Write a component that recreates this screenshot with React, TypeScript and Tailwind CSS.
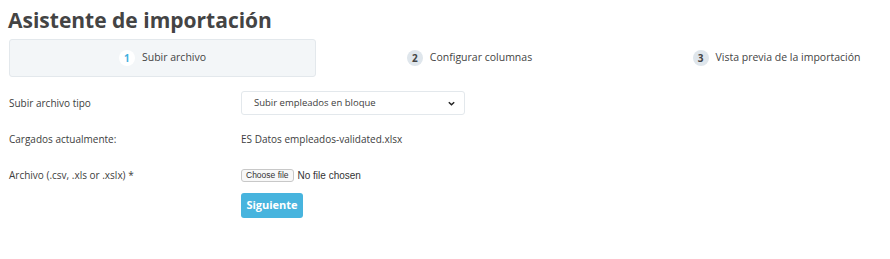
const font = { fontFamily: '"Open Sans", "Noto Sans", sans-serif' };

const steps = [
  { n: 1, label: "Subir archivo", active: true },
  { n: 2, label: "Configurar columnas", active: false },
  { n: 3, label: "Vista previa de la importación", active: false },
];

export default function App() {
  return (
    <div className="w-[890px] h-[259px] overflow-hidden bg-white text-[#3a3a3a]" style={font}>
      <h1 className="pl-2 pt-[5px] text-[21px] leading-[30px] font-bold text-[#444]">
        Asistente de importación
      </h1>

      {/* pasos */}
      <div className="mt-[4px] ml-[9px] grid w-[921px] grid-cols-3">
        {steps.map((s) => (
          <div
            key={s.n}
            className={`flex h-[38px] items-center justify-center gap-[7px] rounded-[3px] border ${
              s.active ? "border-[#e3e8ec] bg-[#f3f6f8]" : "border-transparent"
            }`}
          >
            <span
              className={`flex h-4 w-4 items-center justify-center rounded-full text-[10px] font-bold ${
                s.active ? "bg-white text-[#3fb0e0]" : "bg-[#dfe6ec] text-[#444]"
              }`}
            >
              {s.n}
            </span>
            <span className="text-[10.5px] text-[#444]">{s.label}</span>
          </div>
        ))}
      </div>

      {/* formulario */}
      <div className="mt-[14px] grid grid-cols-[232px_1fr] items-center pl-[9px] text-[10px] text-[#3d3d3d]">
        <span>Subir archivo tipo</span>
        <div className="flex h-[24px] w-[224px] items-center justify-between rounded-[3px] border border-[#e3e8ec] pl-[12px] pr-[8px] text-[9.5px]">
          <span>Subir empleados en bloque</span>
          <svg width="9" height="9" viewBox="0 0 10 10" fill="none">
            <path d="M2 3.5 5 6.5 8 3.5" stroke="#222" strokeWidth="1.6" />
          </svg>
        </div>

        <span className="mt-[17px]">Cargados actualmente:</span>
        <span className="mt-[17px]">ES Datos empleados-validated.xlsx</span>

        <span className="mt-[21px]">Archivo (.csv, .xls or .xslx) *</span>
        <div className="mt-[21px] flex items-center gap-[4px]" style={{ fontFamily: '"Liberation Sans", Arial, sans-serif' }}>
          <span className="rounded-[3px] border border-[#c8c8c8] bg-[#f8f8f8] px-[4px] text-[8.5px] leading-[11px] text-[#333]">
            Choose file
          </span>
          <span className="text-[10px] text-[#333]">No file chosen</span>
        </div>

        <span />
        <div className="mt-[10px]">
          <button className="h-[25px] w-[62px] rounded-[3px] bg-[#47b4de] text-[11px] font-bold text-white">
            Siguiente
          </button>
        </div>
      </div>
    </div>
  );
}
